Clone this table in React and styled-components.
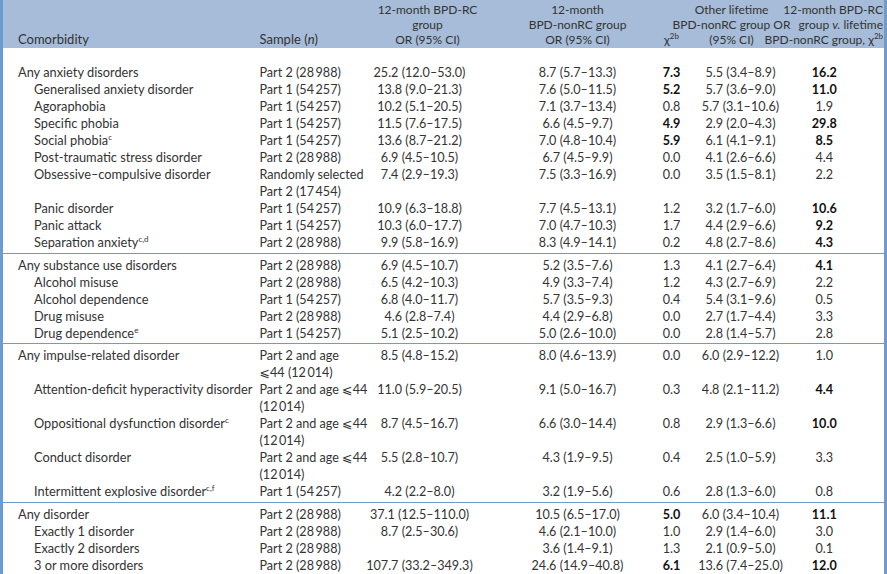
import React from 'react';
import styled, { createGlobalStyle } from 'styled-components';

const GlobalStyle = createGlobalStyle`
    html, body {
        margin: 0;
        padding: 0;
        background: #ffffff;
    }
`

const Table = styled.table`
    width: 887px;
    table-layout: fixed;
    border-collapse: collapse;
    border-left: 3px solid #6d9ccc;
    border-right: 3px solid #6d9ccc;
    font-family: Lato, "Liberation Sans", "DejaVu Sans", sans-serif;
    font-size: 12.6px;
    color: #333333;
`

const Head = styled.thead`
    background-color: #a6bcd8;
`

const HeadCell = styled.th`
    font-weight: 400;
    font-size: ${props => props.left ? 13 : 12}px;
    line-height: 15px;
    padding: 2px ${props => props.padRight || 0}px 1px ${props => props.indent || 0}px;
    vertical-align: bottom;
    text-align: ${props => props.left ? 'left' : 'center'};
    white-space: nowrap;
`

const HeadStack = styled.div`
    display: flex;
    flex-direction: column;
    align-items: ${props => props.end ? 'flex-end' : 'center'};
    transform: translateX(${props => props.shift || 0}px);

    & > span {
        text-align: center;
    }
`

const Group = styled.tbody`
    border-top: ${props => props.first ? 'none' : '1px solid #6d9ccc'};

    & tr:first-child td {
        padding-top: ${props => props.first ? 16 : 3}px;
    }

    & tr:last-child td {
        padding-bottom: 1.5px;
    }
`

const Cell = styled.td`
    line-height: 17px;
    padding: 0;
    vertical-align: top;
    white-space: nowrap;
    text-align: ${props => props.left ? 'left' : 'center'};
    padding-left: ${props => props.padLeft || 0}px;
    padding-right: ${props => props.padRight || 0}px;
    font-weight: ${props => props.bold ? 700 : 400};
    color: ${props => props.bold ? '#111' : 'inherit'};
`

const Label = styled.span`
    display: inline-block;
    font-size: 12.8px;
    padding-left: ${props => props.level ? 31 : 15}px;
`

const Sup = styled.sup`
    font-size: 8px;
    line-height: 0;
    vertical-align: 5px;
`

const Ital = styled.i`
    font-style: italic;
`

const Chi = () => <span>χ<Sup>2b</Sup></span>

const P2 = 'Part 2 (28\u2009988)'
const P1 = 'Part 1 (54\u2009257)'
const AGE = <>Part 2 and age ⩽44<br />(12{'\u2009'}014)</>

const groups = [
    [
        ['Any anxiety disorders', 0, P2, '25.2 (12.0–53.0)', '8.7 (5.7–13.3)', '7.3', true, '5.5 (3.4–8.9)', '16.2', true],
        ['Generalised anxiety disorder', 1, P1, '13.8 (9.0–21.3)', '7.6 (5.0–11.5)', '5.2', true, '5.7 (3.6–9.0)', '11.0', true],
        ['Agoraphobia', 1, P1, '10.2 (5.1–20.5)', '7.1 (3.7–13.4)', '0.8', false, '5.7 (3.1–10.6)', '1.9', false],
        ['Specific phobia', 1, P1, '11.5 (7.6–17.5)', '6.6 (4.5–9.7)', '4.9', true, '2.9 (2.0–4.3)', '29.8', true],
        [<>Social phobia<Sup>c</Sup></>, 1, P1, '13.6 (8.7–21.2)', '7.0 (4.8–10.4)', '5.9', true, '6.1 (4.1–9.1)', '8.5', true],
        ['Post-traumatic stress disorder', 1, P2, '6.9 (4.5–10.5)', '6.7 (4.5–9.9)', '0.0', false, '4.1 (2.6–6.6)', '4.4', false],
        ['Obsessive–compulsive disorder', 1, <>Randomly selected<br />Part 2 (17{'\u2009'}454)</>, '7.4 (2.9–19.3)', '7.5 (3.3–16.9)', '0.0', false, '3.5 (1.5–8.1)', '2.2', false],
        ['Panic disorder', 1, P1, '10.9 (6.3–18.8)', '7.7 (4.5–13.1)', '1.2', false, '3.2 (1.7–6.0)', '10.6', true],
        ['Panic attack', 1, P1, '10.3 (6.0–17.7)', '7.0 (4.7–10.3)', '1.7', false, '4.4 (2.9–6.6)', '9.2', true],
        [<>Separation anxiety<Sup>c,d</Sup></>, 1, P2, '9.9 (5.8–16.9)', '8.3 (4.9–14.1)', '0.2', false, '4.8 (2.7–8.6)', '4.3', true],
    ],
    [
        ['Any substance use disorders', 0, P2, '6.9 (4.5–10.7)', '5.2 (3.5–7.6)', '1.3', false, '4.1 (2.7–6.4)', '4.1', true],
        ['Alcohol misuse', 1, P2, '6.5 (4.2–10.3)', '4.9 (3.3–7.4)', '1.2', false, '4.3 (2.7–6.9)', '2.2', false],
        ['Alcohol dependence', 1, P1, '6.8 (4.0–11.7)', '5.7 (3.5–9.3)', '0.4', false, '5.4 (3.1–9.6)', '0.5', false],
        ['Drug misuse', 1, P2, '4.6 (2.8–7.4)', '4.4 (2.9–6.8)', '0.0', false, '2.7 (1.7–4.4)', '3.3', false],
        [<>Drug dependence<Sup>e</Sup></>, 1, P1, '5.1 (2.5–10.2)', '5.0 (2.6–10.0)', '0.0', false, '2.8 (1.4–5.7)', '2.8', false],
    ],
    [
        ['Any impulse-related disorder', 0, <>Part 2 and age<br />⩽44 (12{'\u2009'}014)</>, '8.5 (4.8–15.2)', '8.0 (4.6–13.9)', '0.0', false, '6.0 (2.9–12.2)', '1.0', false],
        ['Attention-deficit hyperactivity disorder', 1, AGE, '11.0 (5.9–20.5)', '9.1 (5.0–16.7)', '0.3', false, '4.8 (2.1–11.2)', '4.4', true],
        [<>Oppositional dysfunction disorder<Sup>c</Sup></>, 1, AGE, '8.7 (4.5–16.7)', '6.6 (3.0–14.4)', '0.8', false, '2.9 (1.3–6.6)', '10.0', true],
        ['Conduct disorder', 1, AGE, '5.5 (2.8–10.7)', '4.3 (1.9–9.5)', '0.4', false, '2.5 (1.0–5.9)', '3.3', false],
        [<>Intermittent explosive disorder<Sup>c,f</Sup></>, 1, P1, '4.2 (2.2–8.0)', '3.2 (1.9–5.6)', '0.6', false, '2.8 (1.3–6.0)', '0.8', false],
    ],
    [
        ['Any disorder', 0, P2, '37.1 (12.5–110.0)', '10.5 (6.5–17.0)', '5.0', true, '6.0 (3.4–10.4)', '11.1', true],
        ['Exactly 1 disorder', 1, P2, '8.7 (2.5–30.6)', '4.6 (2.1–10.0)', '1.0', false, '2.9 (1.4–6.0)', '3.0', false],
        ['Exactly 2 disorders', 1, P2, '', '3.6 (1.4–9.1)', '1.3', false, '2.1 (0.9–5.0)', '0.1', false],
        ['3 or more disorders', 1, P2, '107.7 (33.2–349.3)', '24.6 (14.9–40.8)', '6.1', true, '13.6 (7.4–25.0)', '12.0', true],
    ],
]

const App = () => {
    return (
        <>
            <GlobalStyle />
            <Table>
                <colgroup>
                    <col style={{ width: 258 }} />
                    <col style={{ width: 106 }} />
                    <col style={{ width: 122 }} />
                    <col style={{ width: 164 }} />
                    <col style={{ width: 40 }} />
                    <col style={{ width: 98 }} />
                    <col />
                </colgroup>
                <Head>
                    <tr>
                        <HeadCell left indent={15}>Comorbidity</HeadCell>
                        <HeadCell left>Sample (<Ital>n</Ital>)</HeadCell>
                        <HeadCell>
                            <HeadStack shift={1}>
                                <span>12-month BPD-RC</span>
                                <span>group</span>
                                <span>OR (95% CI)</span>
                            </HeadStack>
                        </HeadCell>
                        <HeadCell>
                            <HeadStack shift={8}>
                                <span>12-month</span>
                                <span>BPD-nonRC group</span>
                                <span>OR (95% CI)</span>
                            </HeadStack>
                        </HeadCell>
                        <HeadCell><Chi /></HeadCell>
                        <HeadCell>
                            <HeadStack shift={-9}>
                                <span>Other lifetime</span>
                                <span>BPD-nonRC group OR</span>
                                <span>(95% CI)</span>
                            </HeadStack>
                        </HeadCell>
                        <HeadCell padRight={1}>
                            <HeadStack end>
                                <span>12-month BPD-RC</span>
                                <span>group <Ital>v.</Ital> lifetime</span>
                                <span>BPD-nonRC group, <Chi /></span>
                            </HeadStack>
                        </HeadCell>
                    </tr>
                </Head>
                {groups.map((rows, g) => (
                    <Group key={g} first={g === 0}>
                        {rows.map((r, i) => (
                            <tr key={i}>
                                <Cell left><Label level={r[1]}>{r[0]}</Label></Cell>
                                <Cell left>{r[2]}</Cell>
                                <Cell padRight={14}>{r[3]}</Cell>
                                <Cell padLeft={16}>{r[4]}</Cell>
                                <Cell bold={r[6]}>{r[5]}</Cell>
                                <Cell>{r[7]}</Cell>
                                <Cell bold={r[9]} padRight={25}>{r[8]}</Cell>
                            </tr>
                        ))}
                    </Group>
                ))}
            </Table>
        </>
    );
};

export default App;
